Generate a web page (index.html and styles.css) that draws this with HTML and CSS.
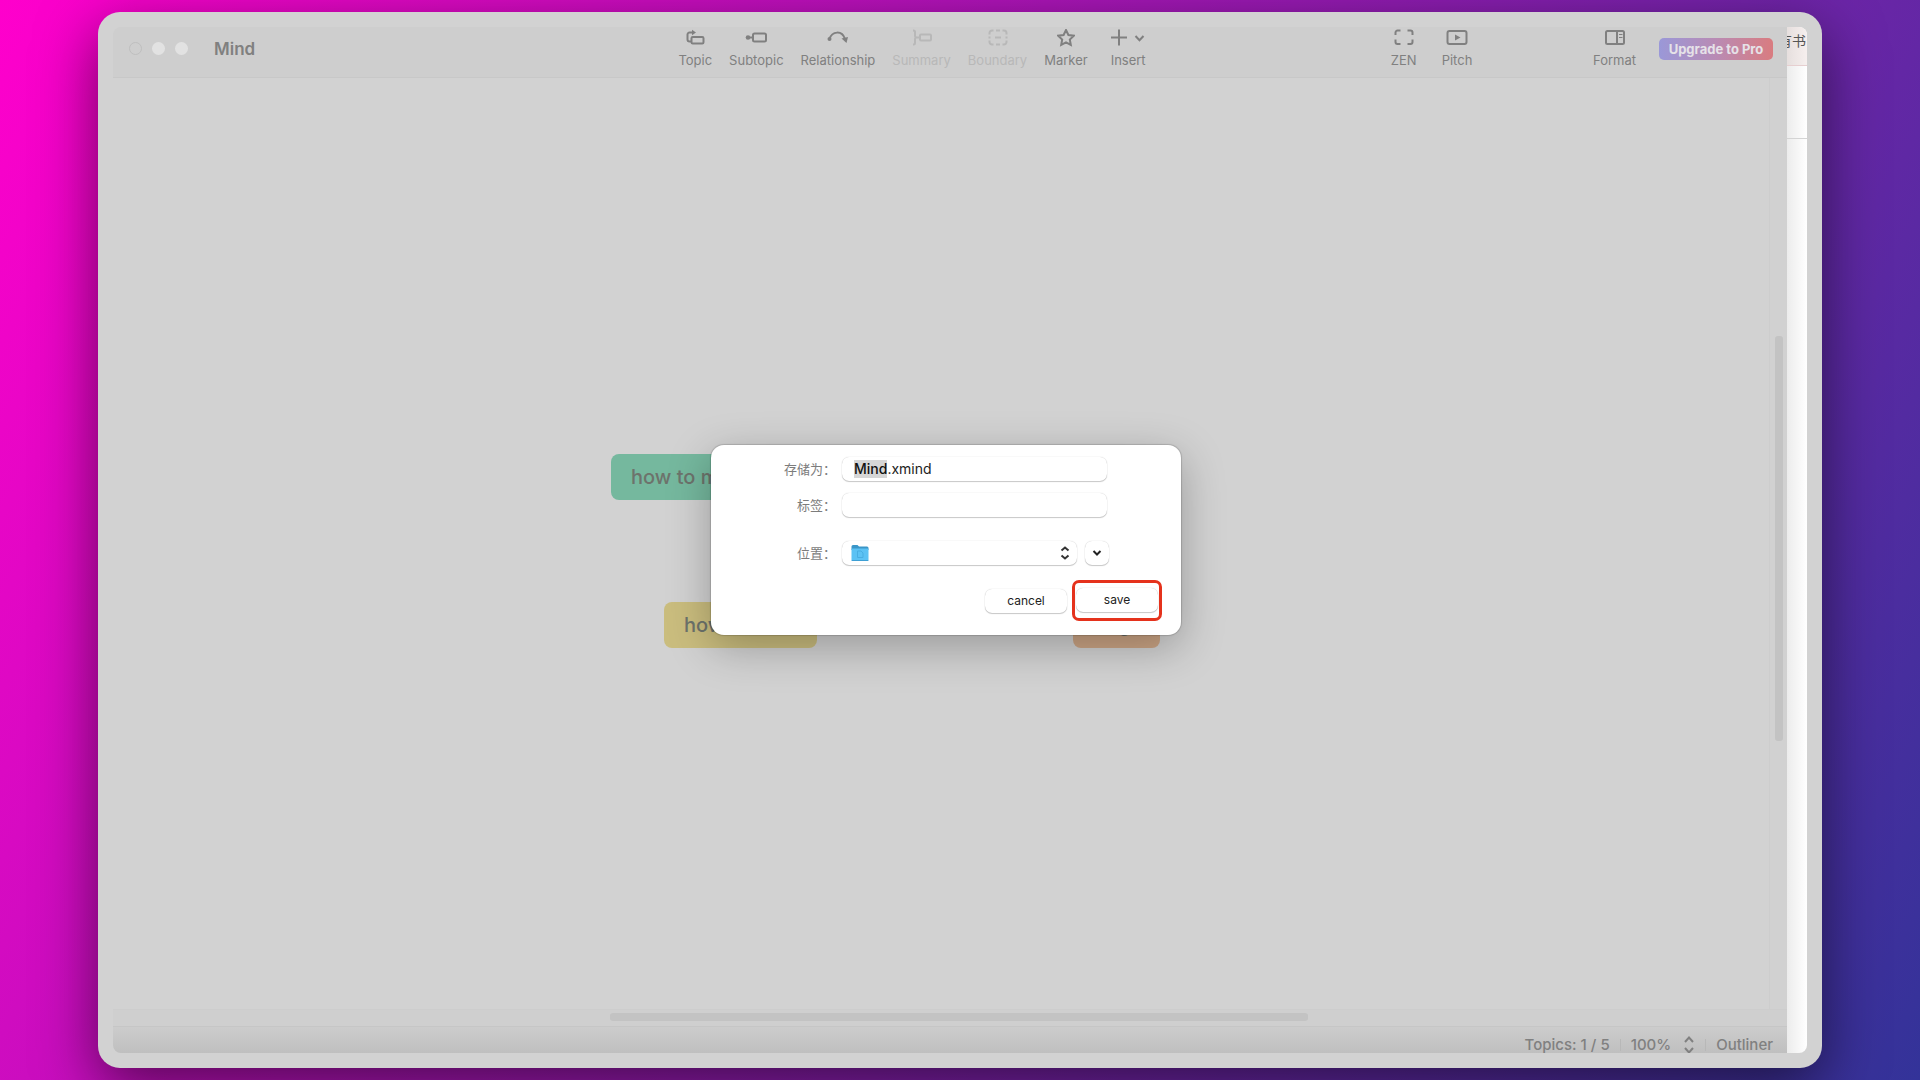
FILE: index.html
```html
<!DOCTYPE html>
<html lang="zh-CN">
<head>
<meta charset="utf-8">
<meta name="viewport" content="width=device-width, initial-scale=1">
<title>Mind</title>
<link rel="stylesheet" href="styles.css">
</head>
<body>
<div class="frame">
  <div class="screen">
    <main class="app">
      <header class="toolbar">
        <div class="lights">
          <span class="light light-off"></span><span class="light"></span><span class="light"></span>
        </div>
        <h1 class="title">Mind</h1>
        <div class="space space-wide"></div>
        <nav class="tools">
          <button class="tool" type="button">
            <svg width="20" height="18" viewBox="0 0 20 18"><rect x="6.5" y="8" width="12" height="6.5" rx="1.2"/><path d="M6.500 12.500H4.500a2 2 0 0 1-2-2V5.500a2 2 0 0 1 2-2H8"/><path class="solid" d="M7 .8 11 3.500 7 6.200z"/></svg>
            <span>Topic</span>
          </button>
          <button class="tool" type="button">
            <svg width="24" height="18" viewBox="0 0 24 18"><circle class="solid" cx="4" cy="8.500" r="2.300"/><path d="M5 8.500h4"/><rect x="9" y="4.500" width="13" height="8" rx="1.500"/></svg>
            <span>Subtopic</span>
          </button>
          <button class="tool" type="button">
            <svg width="22" height="18" viewBox="0 0 22 18"><path d="M2.500 10C5 2 15 1 18 10"/><circle class="solid" cx="2.500" cy="10" r="2"/><path class="solid" d="m14.500 9.500 6.500-1.500-1.500 6z"/></svg>
            <span>Relationship</span>
          </button>
          <button class="tool" type="button" disabled>
            <svg width="22" height="18" viewBox="0 0 22 18"><path d="M2 1.500h.5q1.500 0 1.500 1.500v3.500q0 2 1.500 2-1.500 0-1.500 2V14q0 1.500-1.500 1.500H2M5 8.500h4"/><rect x="9" y="5.500" width="11" height="6" rx="1"/></svg>
            <span>Summary</span>
          </button>
          <button class="tool" type="button" disabled>
            <svg width="20" height="18" viewBox="0 0 20 18"><path d="M5.500 1.500H4A2.500 2.500 0 0 0 1.500 4v1.500M14.500 1.500H16A2.500 2.500 0 0 1 18.500 4v1.500M5.500 15.500H4A2.500 2.500 0 0 1 1.500 13v-1.500M14.500 15.500H16a2.500 2.500 0 0 0 2.500-2.500v-1.500M8 1.500h4M8 15.500h4M1.500 7.500v2M18.500 7.500v2M7 8.500h6"/></svg>
            <span>Boundary</span>
          </button>
          <button class="tool" type="button">
            <svg width="18" height="18" viewBox="0 0 18 18"><path d="m9 1 2.400 5 5.400.7-4 3.800 1 5.500L9 13.400 4.200 16l1-5.500-4-3.800 5.400-.7z"/></svg>
            <span>Marker</span>
          </button>
          <button class="tool tool-insert" type="button">
            <svg width="34" height="18" viewBox="0 0 34 18"><path d="M8 .500v16M0 8.500h16M24.500 7l4 4.200 4-4.200"/></svg>
            <span>Insert</span>
          </button>
        </nav>
        <div class="space space-mid"></div>
        <nav class="tools tools-view">
          <button class="tool" type="button">
            <svg width="20" height="18" viewBox="0 0 20 18"><path d="M6.500 1.500h-3a2 2 0 0 0-2 2V6M13.500 1.500h3a2 2 0 0 1 2 2V6M6.500 15h-3a2 2 0 0 1-2-2v-2.500M13.500 15h3a2 2 0 0 0 2-2v-2.500"/></svg>
            <span>ZEN</span>
          </button>
          <button class="tool" type="button">
            <svg width="22" height="18" viewBox="0 0 22 18"><rect x="1.500" y="2" width="19" height="13" rx="2"/><path class="solid" d="M9 5.500v6l5.500-3z"/></svg>
            <span>Pitch</span>
          </button>
        </nav>
        <div class="space space-small"></div>
        <button class="tool" type="button">
          <svg width="20" height="18" viewBox="0 0 20 18"><rect x="1" y="2" width="18" height="13" rx="1.500"/><path d="M12 2v13"/><path class="thin" d="M14 5.500h3.500M14 8.500h3.500"/></svg>
          <span>Format</span>
        </button>
        <button class="upgrade" type="button">Upgrade to Pro</button>
      </header>

      <section class="canvas">
        <div class="node node-green">how to make</div>
        <div class="node node-yellow">how to use it</div>
        <div class="node node-orange">Begin</div>
      </section>
      <div class="track track-y"><span class="thumb"></span></div>
      <div class="track track-x"><span class="thumb"></span></div>

      <footer class="status">
        <span>Topics: 1 / 5</span>
        <span class="divider"></span>
        <button class="zoom" type="button">100%
          <svg width="12" height="18" viewBox="0 0 12 18"><path d="m2 6 4-4.500L10 6M2 12l4 4.500 4-4.500"/></svg>
        </button>
        <span class="divider"></span>
        <button class="outliner" type="button">Outliner</button>
      </footer>

      <div class="overlay">
        <form class="dialog" role="dialog" aria-label="存储为">
          <label class="label" for="name">存储为：</label>
          <div class="field filename"><span class="picked">Mind</span><input id="name" type="text" value=".xmind"></div>
          <label class="label" for="tags">标签：</label>
          <input class="field" id="tags" type="text">
          <label class="label label-place" for="place">位置：</label>
          <div class="place">
            <div class="picker">
              <svg class="folder" width="18" height="18" viewBox="0 0 18 18"><path fill="#3a96c8" d="M.500 2.500Q.500 1 2 1h4.500L8 2.500h8q1.500 0 1.500 1.500v2H.500z"/><rect x=".500" y="4.500" width="17" height="12.500" rx="1" fill="#5cc2f4"/><path fill="#3d9fd4" d="M.500 16h17q0 1-1 1h-15q-1 0-1-1z"/><path fill="none" stroke="#49aee2" d="M6.500 7h3.500l2 2v4.500H6.500z"/></svg>
              <select class="field" id="place"><option></option></select>
              <svg class="updown" width="10" height="14" viewBox="0 0 10 14"><path d="m1.500 4.500 3.500-3 3.500 3M1.500 9.500l3.500 3 3.500-3"/></svg>
            </div>
            <button class="key expand" type="button" aria-label="展开">
              <svg width="10" height="8" viewBox="0 0 10 8"><path d="m1.500 2 3.500 3.500L8.500 2"/></svg>
            </button>
          </div>
          <div class="actions">
            <button class="key" type="button">cancel</button>
            <span class="ring"><button class="key" type="submit">save</button></span>
          </div>
        </form>
      </div>
    </main>
    <aside class="behind">
      <div class="tab">有书</div>
      <div class="band"></div>
    </aside>
  </div>
</div>
</body>
</html>
```
FILE: styles.css
```css
* { box-sizing: border-box; }

body {
  margin: 0;
  min-height: 100vh;
  display: flex;
  padding: 12px 98px;
  background: linear-gradient(120deg, #ff00cc, #333399);
  font-family: Inter, "Noto Sans CJK SC", sans-serif;
  color: #808080;
}

button, input, select { font: inherit; color: inherit; margin: 0; }
button { border: 0; padding: 0; background: none; }
svg { display: block; fill: none; stroke: currentColor; stroke-width: 2; }
.solid { fill: currentColor; stroke: none; }
.thin { stroke-width: 1; }

.frame {
  flex: 1;
  display: flex;
  padding: 15px;
  border-radius: 22px;
  background: #d2d2d2;
  box-shadow: 0 20px 60px rgba(0, 0, 0, .55);
}
.screen {
  flex: 1;
  display: flex;
  border-radius: 8px;
  overflow: hidden;
}

.app {
  position: relative;
  flex: 1;
  min-width: 0;
  display: grid;
  grid-template: 51px 1fr 17px 27px / 1fr 18px;
}

/* toolbar */
.toolbar {
  grid-column: 1 / -1;
  display: flex;
  align-items: center;
  padding: 0 14px 7px 16px;
  background: #cecece;
  border-bottom: 1px solid #c8c8c8;
}
.lights { display: flex; gap: 10px; }
.light {
  width: 13px;
  height: 13px;
  border-radius: 50%;
  background: #e2e2e2;
}
.light-off { background: none; border: 1px solid #bfbfbf; }
.title {
  margin: 0 0 0 26px;
  font-size: 17px;
  line-height: 20px;
  font-weight: 600;
}
.space { flex-basis: 0; }
.space-wide { flex-grow: 428; }
.space-mid { flex-grow: 248; }
.space-small { flex-grow: 122; }
.tools { display: flex; gap: 17px; }
.tools-view { gap: 25px; }
.tool {
  display: flex;
  flex-direction: column;
  align-items: center;
  gap: 5px;
  font-size: 13px;
  line-height: 16px;
}
.tool:disabled { color: #b8b8b8; }
.tool-insert { margin-left: 6px; }
.upgrade {
  margin-left: 23px;
  width: 114px;
  height: 22px;
  border-radius: 5px;
  background: linear-gradient(90deg, #9a98d8, #b98bb4 50%, #d97c80);
  color: #e6e2e8;
  font-size: 13px;
  font-weight: 700;
}

/* mind map */
.canvas {
  position: relative;
  overflow: hidden;
  background: #d2d2d2;
}
.node {
  position: absolute;
  height: 46px;
  padding: 0 20px;
  border-radius: 8px;
  font-size: 20px;
  line-height: 47px;
  white-space: nowrap;
  color: #6d736c;
  font-weight: 500;
}
.node-green { left: 498px; top: 376px; background: #75b89e; }
.node-yellow { left: 551px; top: 524px; width: 153px; background: #cabd7e; }
.node-orange { left: 960px; top: 524px; width: 87px; background: #cca585; }

.track { display: flex; background: #cfcfcf; }
.track-y { justify-content: center; padding-top: 258px; border-left: 1px solid #cdcdcd; background: #d1d1d1; }
.track-y .thumb { width: 8px; height: 405px; }
.track-x { grid-column: 1 / -1; align-items: center; padding: 0 0 2px 497px; border-top: 1px solid #cdcdcd; }
.track-x .thumb { width: 698px; height: 8px; }
.thumb { border-radius: 3px; background: #c3c3c3; }

.status {
  grid-column: 1 / -1;
  display: flex;
  justify-content: flex-end;
  align-items: center;
  gap: 10px;
  padding: 9px 14px 0 0;
  border-top: 1px solid #c6c6c6;
  background: linear-gradient(#cccccc, #bfbfbf);
  font-size: 15px;
  line-height: 18px;
  font-weight: 500;
}
.divider { width: 1px; height: 12px; background: #b8b8b8; }
.zoom { display: flex; gap: 12px; }

/* save dialog */
.overlay {
  position: absolute;
  inset: 0 8px 0 0;
  display: grid;
  place-items: center;
  pointer-events: none;
}
.dialog {
  pointer-events: auto;
  width: 470px;
  display: grid;
  grid-template-columns: 125px 265px;
  column-gap: 6px;
  row-gap: 12px;
  padding: 12px 0 14px;
  border-radius: 13px;
  background: #fff;
  box-shadow: 0 0 1px 1px rgba(0, 0, 0, .15), 0 12px 44px rgba(0, 0, 0, .28);
  font-size: 13px;
  line-height: 24px;
}
.label { text-align: right; color: #7c7c7c; }
.label-place { margin-top: 12px; }
.field {
  width: 100%;
  height: 24px;
  padding: 0 12px;
  border: 0;
  border-radius: 7px;
  background: #fff;
  box-shadow: 0 0 1px rgba(0, 0, 0, .25), 0 1px 1px rgba(0, 0, 0, .2);
  outline: 0;
}
.filename { display: flex; align-items: center; font-size: 14px; color: #222; }
.filename input { flex: 1; min-width: 0; padding: 0; border: 0; outline: 0; background: none; }
.picked { line-height: 18px; background: #d6d6d6; color: #111; font-weight: 500; }
.place { display: flex; gap: 8px; margin: 12px -2px 0 0; }
.picker { flex: 1; display: grid; align-items: center; }
.picker > * { grid-area: 1 / 1; }
.picker select { appearance: none; }
.folder { z-index: 1; margin-left: 9px; stroke: none; stroke-width: 1; }
.updown { z-index: 1; justify-self: end; margin-right: 7px; color: #333; pointer-events: none; }
.key {
  width: 82px;
  height: 24px;
  border-radius: 7px;
  background: #fff;
  box-shadow: 0 0 1px rgba(0, 0, 0, .25), 0 1px 1px rgba(0, 0, 0, .2);
  color: #222;
  font-size: 12px;
}
.expand { width: 24px; display: grid; place-items: center; }
.actions {
  grid-column: 1 / -1;
  display: flex;
  justify-content: flex-end;
  align-items: center;
  gap: 5px;
  margin: 3px -55px 0 0;
}
.ring {
  display: flex;
  padding: 5px 1px 6px;
  border: 3px solid #e5321c;
  border-radius: 7px;
}

/* window behind */
.behind {
  width: 20px;
  overflow: hidden;
  background: linear-gradient(90deg, #ececec, #fff);
}
.tab {
  height: 39px;
  display: flex;
  justify-content: flex-end;
  padding-right: 1px;
  border-bottom: 1px solid #e6cfd0;
  background: linear-gradient(90deg, #e6dfde, #f6efee);
  font-size: 14px;
  line-height: 28px;
  white-space: nowrap;
  color: #555;
}
.band { height: 73px; border-bottom: 1px solid #d4d4d4; }
```
